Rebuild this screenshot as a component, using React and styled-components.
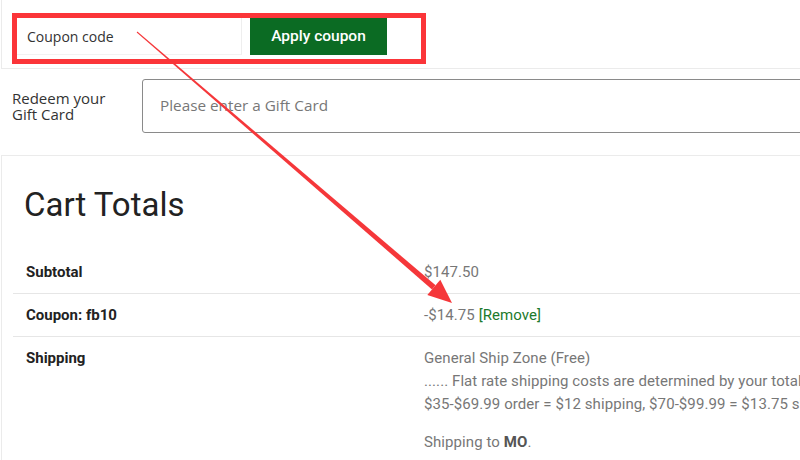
import React from "react";
import styled, { createGlobalStyle } from "styled-components";

const GlobalStyle = createGlobalStyle`
  html, body {
    margin: 0;
    padding: 0;
    background: #fff;
    overflow: hidden;
  }
  body {
    font-family: Roboto, "Liberation Sans", sans-serif;
    color: #333;
  }
`;

const Page = styled.div`
  position: relative;
  width: 860px;
  height: 460px;
  padding-left: 1px;
  box-sizing: border-box;
`;

const CouponCard = styled.div`
  height: 69px;
  border: 1px solid #ebebeb;
  border-top: none;
  padding: 13px 0 0 10px;
  box-sizing: border-box;
`;

const Highlight = styled.div`
  width: 414px;
  height: 51px;
  border: 5px solid #fb3539;
  box-sizing: border-box;
  display: flex;
  align-items: flex-start;
  gap: 8px;
`;

const CouponInput = styled.div`
  width: 225px;
  height: 37px;
  border-right: 1px solid #eeeeee;
  border-bottom: 1px solid #f2f2f2;
  box-sizing: border-box;
  padding-left: 10px;
  display: flex;
  align-items: center;
  font-family: "Open Sans", "Noto Sans", sans-serif;
  font-size: 14px;
  color: #333;
`;

const ApplyButton = styled.div`
  width: 137px;
  height: 37px;
  background: #0b6b23;
  color: #fff;
  display: flex;
  align-items: center;
  justify-content: center;
  padding-bottom: 2px;
  box-sizing: border-box;
  font-family: Roboto, sans-serif;
  font-weight: 500;
  font-size: 15.5px;
`;

const GiftRow = styled.div`
  display: flex;
  align-items: flex-start;
  height: 86px;
  padding: 10px 0 0 11px;
  box-sizing: border-box;
`;

const GiftLabel = styled.div`
  width: 130px;
  padding-top: 11px;
  font-family: "Open Sans", "Noto Sans", sans-serif;
  font-size: 15px;
  line-height: 16px;
  color: #333;
`;

const GiftInput = styled.div`
  flex: 1;
  height: 54px;
  border: 1px solid #8a8a8a;
  border-radius: 3px;
  box-sizing: border-box;
  padding: 0 0 2px 17px;
  display: flex;
  align-items: center;
  font-family: "Open Sans", "Noto Sans", sans-serif;
  font-size: 15.3px;
  color: #777;
`;

const TotalsCard = styled.div`
  border: 1px solid #ebebeb;
  border-right: none;
  height: 400px;
  padding: 0 0 0 11px;
`;

const Title = styled.h2`
  margin: 0;
  padding: 27px 0 0 11px;
  height: 95px;
  box-sizing: border-box;
  font-family: Roboto, sans-serif;
  font-weight: 400;
  font-size: 33px;
  line-height: 44px;
  color: #222;
`;

const Row = styled.div`
  display: grid;
  grid-template-columns: 398px 1fr;
  padding: 10px 0 ${(p) => (p.$last ? "0" : "9px")} 13px;
  border-bottom: ${(p) => (p.$last ? "none" : "1px solid #e6e6e6")};
  font-size: 15px;
  line-height: 23px;
`;

const Label = styled.div`
  font-weight: 700;
  color: #222;
`;

const Value = styled.div`
  color: #777;
  white-space: nowrap;
  letter-spacing: 0.08px;
`;

const RemoveLink = styled.span`
  color: #1c7a2c;
`;

const Note = styled.p`
  margin: 15px 0 0;
  b {
    color: #555;
  }
`;

const ArrowLayer = styled.svg`
  position: absolute;
  left: 0;
  top: 0;
  pointer-events: none;
`;

export default function App() {
  return (
    <>
      <GlobalStyle />
      <Page>
        <CouponCard>
          <Highlight>
            <CouponInput>Coupon code</CouponInput>
            <ApplyButton>Apply coupon</ApplyButton>
          </Highlight>
        </CouponCard>
        <GiftRow>
          <GiftLabel>
            Redeem your
            <br />
            Gift Card
          </GiftLabel>
          <GiftInput>Please enter a Gift Card</GiftInput>
        </GiftRow>
        <TotalsCard>
          <Title>Cart Totals</Title>
          <Row>
            <Label>Subtotal</Label>
            <Value>$147.50</Value>
          </Row>
          <Row>
            <Label>Coupon: fb10</Label>
            <Value>
              -$14.75 <RemoveLink>[Remove]</RemoveLink>
            </Value>
          </Row>
          <Row $last>
            <Label>Shipping</Label>
            <Value>
              General Ship Zone (Free)
              <br />
              ...... Flat rate shipping costs are determined by your total order amount.
              <br />
              $35-$69.99 order = $12 shipping, $70-$99.99 = $13.75 shipping
              <Note>
                Shipping to <b>MO</b>.
              </Note>
            </Value>
          </Row>
        </TotalsCard>
        <ArrowLayer width="800" height="460" viewBox="0 0 800 460">
          <polygon
            points="137.3,31.6 136.7,32.4 432.0,289.5 435.6,285.3"
            fill="#f5373a"
          />
          <polygon points="452,303 427.3,295.0 440.3,279.8" fill="#f5373a" />
        </ArrowLayer>
      </Page>
    </>
  );
}
